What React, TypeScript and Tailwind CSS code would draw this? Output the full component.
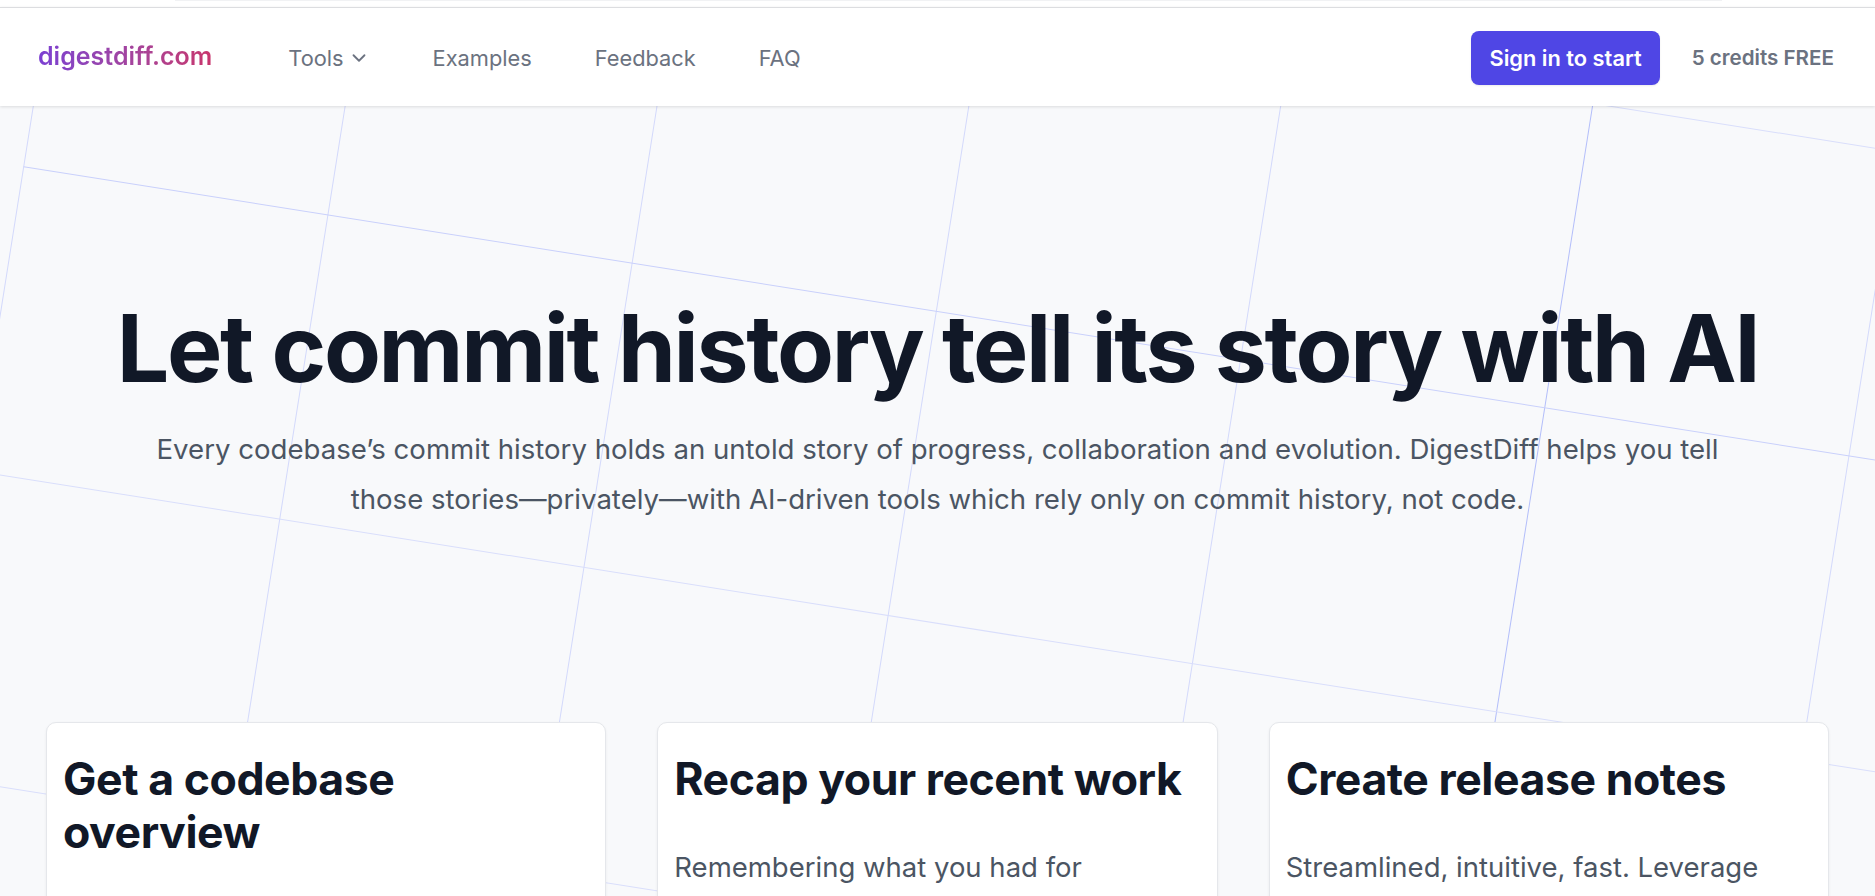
import React from "react";
import { ChevronDown } from "lucide-react";

function GridBackground() {
  const step = 308;
  const verticals = [0, 1, 2, 3, 4, 5, 6, 7];
  const horizontals = [-3, -2, -1, 0, 1, 2, 3, 4];
  return (
    <svg
      className="absolute left-0 top-0 pointer-events-none"
      width={1875}
      height={1400}
      viewBox="0 106 1875 1400"
      fill="none"
    >
      <g transform="translate(23.7 166.8) rotate(9)">
        {verticals.map((i) => (
          <line
            key={"v" + i}
            x1={i * step}
            y1={-1200}
            x2={i * step}
            y2={2000}
            stroke={i === 5 ? "#b3befa" : "#d3d9fb"}
            strokeWidth={1}
          />
        ))}
        {horizontals.map((j) => (
          <line
            key={"h" + j}
            x1={0}
            y1={j * step}
            x2={2600}
            y2={j * step}
            stroke={j === 0 ? "#c9d0fb" : "#d9defb"}
            strokeWidth={1}
          />
        ))}
      </g>
    </svg>
  );
}

function Card({ title, body }: { title: React.ReactNode; body: string }) {
  return (
    <div className="bg-white border border-[#e5e7eb] rounded-[10px] shadow-[0_1px_3px_rgba(16,24,40,0.06)] pt-[30px] pl-[16px] pr-[24px] pb-[40px] min-h-[420px]">
      <h2 className="text-[44.6px] leading-[53px] font-bold text-[#111827] tracking-[-0.01em]">{title}</h2>
      <p className="mt-[38px] text-[27.5px] leading-[46px] text-[#4b5563]">{body}</p>
    </div>
  );
}

export default function App() {
  return (
    <div className="font-['Inter','Noto_Sans',sans-serif] bg-[#f8f9fb] min-h-screen overflow-hidden">
      <div className="h-[7px] bg-white">
        <div className="ml-[175px] mr-[153px] h-px bg-[#f1f2f4]" />
      </div>
      <header className="relative z-10 bg-white border-t border-[#dcdde0] h-[99px] shadow-[0_1px_3px_rgba(0,0,0,0.12)] flex items-center pl-[38px] pr-[41px] pt-[2px]">
        <a className="text-[25px] font-semibold bg-linear-to-r from-[#7b3fd2] to-[#c8346c] bg-clip-text text-transparent leading-none pb-[4px]">
          digestdiff.com
        </a>
        <nav className="ml-[76px] flex items-center gap-[63px] text-[21.8px] text-[#6b7280]">
          <span className="flex items-center gap-[4px]">
            Tools
            <ChevronDown className="w-[22px] h-[22px]" strokeWidth={2} />
          </span>
          <span>Examples</span>
          <span>Feedback</span>
          <span>FAQ</span>
        </nav>
        <div className="ml-auto flex items-center">
          <button className="h-[54px] px-[18px] rounded-[8px] bg-[#4f46e5] text-white font-semibold text-[21.8px] shadow-[0_1px_2px_rgba(0,0,0,0.08)]">
            Sign in to start
          </button>
          <span className="ml-[32px] text-[20.6px] font-semibold text-[#6b7280]">5 credits FREE</span>
        </div>
      </header>
      <main className="relative">
        <GridBackground />
        <section className="relative pt-[192px] flex flex-col items-center">
          <h1 className="text-[93px] leading-[101px] font-bold tracking-[-0.025em] text-[#111827] text-center">
            Let commit history tell its story with AI
          </h1>
          <p className="mt-[25px] max-w-[1600px] text-center text-[27.6px] leading-[50px] text-[#4b5563]">
            Every codebase’s commit history holds an untold story of progress, collaboration and evolution. DigestDiff helps you tell those stories—privately—with AI-driven tools which rely only on commit history, not code.
          </p>
        </section>
        <section className="relative mt-[198px] px-[46px] grid grid-cols-3 gap-[51px]">
          <Card
            title={<>Get a codebase<br />overview</>}
            body="Understand any repository in minutes. Get a high-level summary of how the codebase evolved, who worked on what, and where it is heading."
          />
          <Card
            title="Recap your recent work"
            body="Remembering what you had for yesterday’s standup is hard. Let DigestDiff summarize your recent commits so you can focus on what matters."
          />
          <Card
            title="Create release notes"
            body="Streamlined, intuitive, fast. Leverage generative summaries of the changes between two versions to write release notes your users will read."
          />
        </section>
      </main>
    </div>
  );
}
